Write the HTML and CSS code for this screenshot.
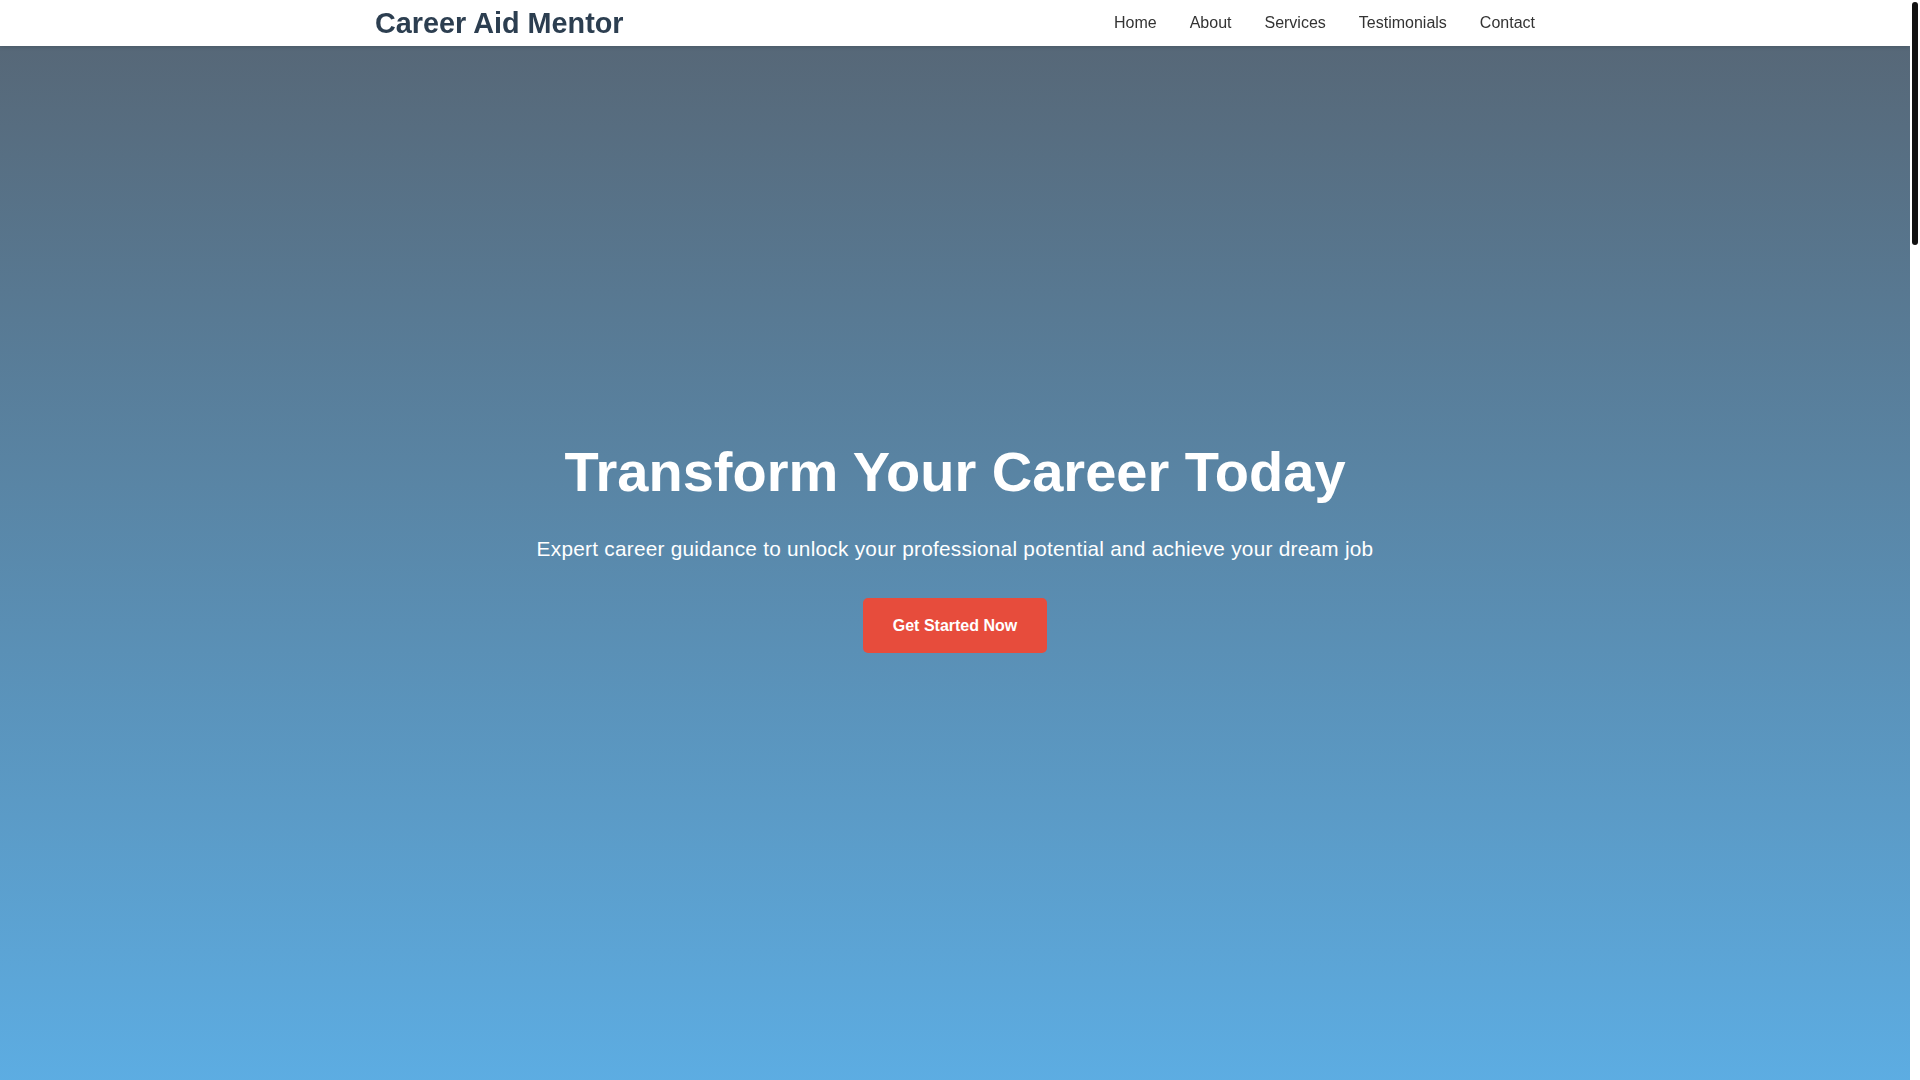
FILE: index.html
```html
<!DOCTYPE html>
<html lang="en">
<head>
<meta charset="UTF-8">
<meta name="viewport" content="width=device-width, initial-scale=1.0">
<title>Career Aid Mentor</title>
<link rel="stylesheet" href="styles.css">
</head>
<body>
<header class="site-header">
  <div class="container header-inner">
    <a class="logo" href="#home">Career Aid Mentor</a>
    <nav class="main-nav">
      <a href="#home">Home</a>
      <a href="#about">About</a>
      <a href="#services">Services</a>
      <a href="#testimonials">Testimonials</a>
      <a href="#contact">Contact</a>
    </nav>
  </div>
</header>

<div class="scroll-rail" aria-hidden="true"><span class="scroll-thumb"></span></div>

<section class="hero" id="home">
  <div class="hero-content">
    <h1>Transform Your Career Today</h1>
    <p>Expert career guidance to unlock your professional potential and achieve your dream job</p>
    <a class="btn" href="#contact">Get Started Now</a>
  </div>
</section>

<section class="section" id="about">
  <div class="container">
    <h2>About Us</h2>
    <p>We help professionals at every stage find direction, build confidence and land roles that fit their goals.</p>
  </div>
</section>

<section class="section alt" id="services">
  <div class="container">
    <h2>Our Services</h2>
    <div class="cards">
      <div class="card"><h3>Career Coaching</h3><p>One-on-one sessions to map out your next move.</p></div>
      <div class="card"><h3>Resume Review</h3><p>Clear, focused resumes that get you noticed.</p></div>
      <div class="card"><h3>Interview Prep</h3><p>Mock interviews and honest feedback.</p></div>
    </div>
  </div>
</section>

<section class="section" id="testimonials">
  <div class="container">
    <h2>Testimonials</h2>
    <p>"The guidance I received changed the way I approach my career." — Sarah M.</p>
  </div>
</section>

<section class="section alt" id="contact">
  <div class="container">
    <h2>Contact Us</h2>
    <p>Ready to take the next step? Get in touch and we'll be happy to help.</p>
  </div>
</section>

<footer class="site-footer">
  <div class="container">&copy; 2024 Career Aid Mentor. All rights reserved.</div>
</footer>
</body>
</html>
```
FILE: styles.css
```css
* {
  box-sizing: border-box;
}

html {
  scroll-behavior: smooth;
  scrollbar-width: none;
}

html::-webkit-scrollbar {
  display: none;
}

body {
  margin: 0 10px 0 0;
  font-family: "Liberation Sans", Arial, sans-serif;
  line-height: 1.6;
  color: #333;
  background: #fff;
}

.container {
  max-width: 1200px;
  margin: 0 auto;
  padding: 0 20px;
}

/* Slim scroll indicator on the right edge */
.scroll-rail {
  position: fixed;
  top: 0;
  right: 0;
  width: 10px;
  height: 100vh;
  background: #fff;
  z-index: 20;
}

.scroll-thumb {
  position: absolute;
  top: 2px;
  left: 2px;
  width: 6px;
  height: 243px;
  background: #111;
  border-radius: 3px;
}

/* Header */
.site-header {
  position: fixed;
  top: 0;
  left: 0;
  right: 10px;
  z-index: 10;
  background: #fff;
  box-shadow: 0 1px 4px rgba(0, 0, 0, 0.15);
}

.header-inner {
  display: flex;
  align-items: center;
  justify-content: space-between;
  height: 46px;
}

.logo {
  font-size: 28.8px;
  font-weight: 700;
  line-height: 34px;
  color: #2c3e50;
  text-decoration: none;
}

.main-nav {
  display: flex;
  gap: 33px;
}

.main-nav a {
  font-size: 16px;
  color: #333;
  text-decoration: none;
}

/* Hero */
.hero {
  height: 100vh;
  display: flex;
  align-items: center;
  justify-content: center;
  text-align: center;
  color: #fff;
  background: linear-gradient(rgba(44, 62, 80, 0.8), rgba(52, 152, 219, 0.8)), #fff;
  padding-top: 11px;
}

.hero-content h1 {
  margin: 0 0 29px;
  font-size: 56px;
  line-height: 67px;
  font-weight: 700;
}

.hero-content p {
  margin: 0 0 33px;
  font-size: 20.8px;
  line-height: 30.72px;
  letter-spacing: 0.25px;
}

.btn {
  display: inline-block;
  padding: 15px 30px;
  font-size: 16px;
  font-weight: 700;
  color: #fff;
  background: #e74c3c;
  border-radius: 5px;
  text-decoration: none;
}

/* Sections below the fold */
.section {
  min-height: 800px;
  padding: 80px 0;
}

.section.alt {
  background: #f4f6f8;
}

.section h2 {
  margin: 0 0 24px;
  font-size: 36px;
  color: #2c3e50;
  text-align: center;
}

.section p {
  text-align: center;
  font-size: 18px;
}

.cards {
  display: grid;
  grid-template-columns: repeat(3, 1fr);
  gap: 30px;
}

.card {
  background: #fff;
  padding: 30px;
  border-radius: 8px;
  box-shadow: 0 2px 8px rgba(0, 0, 0, 0.08);
}

.card h3 {
  margin: 0 0 10px;
  color: #2c3e50;
}

.site-footer {
  padding: 30px 0;
  background: #2c3e50;
  color: #fff;
  text-align: center;
}
```
